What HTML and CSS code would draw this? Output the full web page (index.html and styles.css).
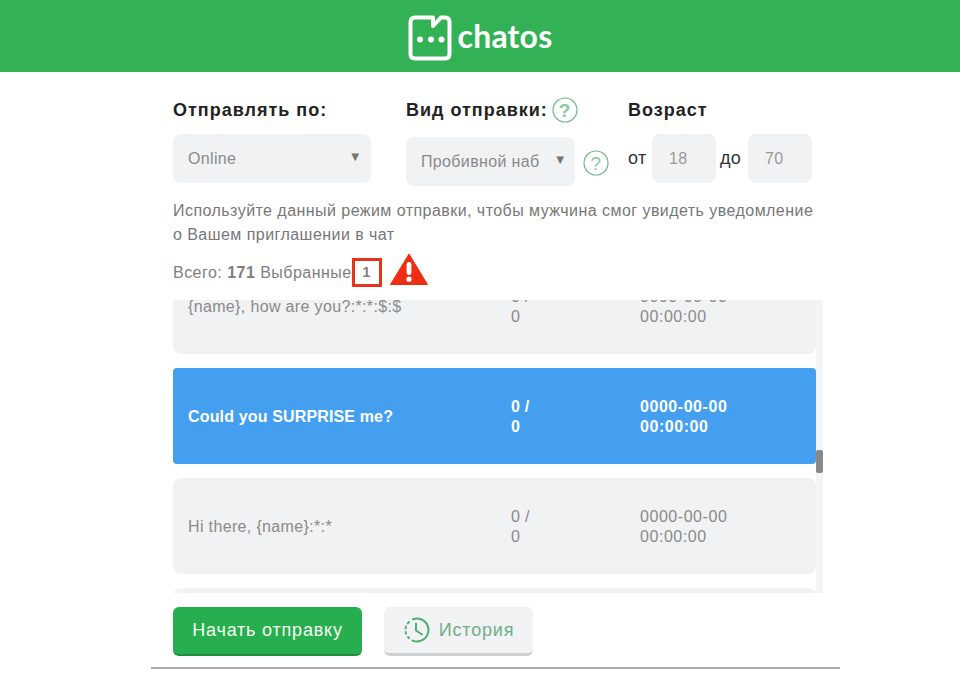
FILE: index.html
```html
<!DOCTYPE html>
<html>
<head>
    <meta charset="utf-8">
    <title>chatos</title>
    <link rel="stylesheet" href="styles.css">
</head>
<body>
    <header class="top">
        <svg class="logo" viewBox="0 0 44 46" width="44" height="46">
            <path d="M7 2.5H25L25 11L33 2.5H37Q41.5 2.5 41.5 7V39Q41.5 43.5 37 43.5H7Q2.5 43.5 2.5 39V7Q2.5 2.5 7 2.5Z" fill="none" stroke="#fff" stroke-width="4" stroke-linejoin="round"/>
            <circle cx="12" cy="24.5" r="3" fill="#fff"/>
            <circle cx="23" cy="24.5" r="3" fill="#fff"/>
            <circle cx="33.5" cy="24.5" r="3" fill="#fff"/>
        </svg>
        <span class="brand">chatos</span>
    </header>

    <main class="wrap">
        <div class="filters">
            <div class="col col-send">
                <div class="label">Отправлять по:</div>
                <div class="select">Online<span class="arrow">▼</span></div>
            </div>
            <div class="col col-type">
                <div class="label">Вид отправки:
                    <svg class="help" viewBox="0 0 26 26" width="26" height="26"><circle cx="13" cy="13" r="12" fill="none" stroke="#6fb98a" stroke-width="1.2"/><text x="13" y="19.5" text-anchor="middle" class="help-mark">?</text></svg>
                </div>
                <div class="type-row">
                    <div class="select select-type">Пробивной наб<span class="arrow">▼</span></div>
                    <svg class="help help-side" viewBox="0 0 26 26" width="26" height="26"><circle cx="13" cy="13" r="12" fill="none" stroke="#6fb98a" stroke-width="1.2"/><text x="13" y="19.5" text-anchor="middle" class="help-mark">?</text></svg>
                </div>
            </div>
            <div class="col">
                <div class="label">Возраст</div>
                <div class="age">
                    <span>от</span><div class="age-box">18</div>
                    <span>до</span><div class="age-box">70</div>
                </div>
            </div>
        </div>

        <p class="hint">Используйте данный режим отправки, чтобы мужчина смог увидеть уведомление о Вашем приглашении в чат</p>

        <div class="totals">
            <span>Всего: <b>171</b> Выбранные</span><span class="picked">1</span>
            <svg class="warn" viewBox="0 0 38 32" width="38" height="32">
                <path d="M19 1L37.5 31.5H.5Z" fill="#ee2e12" stroke="#ee2e12" stroke-linejoin="round"/>
                <rect x="16.6" y="9" width="4.8" height="13" rx="2.2" fill="#fff"/>
                <circle cx="19" cy="26.2" r="2.6" fill="#fff"/>
            </svg>
        </div>

        <div class="list">
            <div class="rows">
                <div class="row row-first">
                    <div class="r-name">{name}, how are you?:*:*:$:$</div>
                    <div class="r-count">0 /<br>0</div>
                    <div class="r-date">0000-00-00<br>00:00:00</div>
                </div>
                <div class="row active">
                    <div class="r-name">Could you SURPRISE me?</div>
                    <div class="r-count">0 /<br>0</div>
                    <div class="r-date">0000-00-00<br>00:00:00</div>
                </div>
                <div class="row">
                    <div class="r-name">Hi there, {name}:*:*</div>
                    <div class="r-count">0 /<br>0</div>
                    <div class="r-date">0000-00-00<br>00:00:00</div>
                </div>
                <div class="row"></div>
            </div>
            <div class="thumb"></div>
        </div>

        <div class="actions">
            <button class="btn btn-start">Начать отправку</button>
            <button class="btn btn-history">
                <svg viewBox="0 0 28 28" width="28" height="28" fill="none" stroke="#4fae74" stroke-width="2">
                    <path d="M10 3.2A11.5 11.5 0 1 1 9.5 24.6" stroke-linecap="round"/>
                    <path d="M6 22.2L5 21M3 17.8L2.6 16M2.6 12.5L3 10.6M4.8 7.4L6 6" stroke-linecap="round"/>
                    <path d="M13 7.5V14.5L19 18.5" stroke-linecap="round" stroke-linejoin="round"/>
                </svg>
                История
            </button>
        </div>
    </main>
</body>
</html>
```

FILE: styles.css
```css
* {box-sizing: border-box;}
html, body {height: 100%;}
body {margin: 0; background-color: #fff; font-family: "Liberation Sans", Arial, sans-serif; font-size: 16px; letter-spacing: .35px; color: #8a8a8a; overflow: hidden;}

/* header */
.top {height: 72px; background-color: #33b155; display: flex; align-items: center; justify-content: center; gap: 6px;}
.logo {display: block; margin-top: 3px;}
.brand {font-family: Lato, sans-serif; font-weight: 700; font-size: 32px; color: #fff; letter-spacing: .2px; line-height: 1;}

/* main block */
.wrap {width: 689px; margin-left: 151px; padding: 0 17px 0 22px; height: 597px; border-bottom: 2px solid #aaa;}

.filters {display: flex; padding-top: 25px;}
.col-send {width: 233px;}
.col-type {width: 222px;}
.label {display: flex; align-items: center; gap: 4px; height: 26px; font-size: 18px; font-weight: 700; letter-spacing: 1px; color: #222; margin-bottom: 11px; white-space: nowrap;}
.select {position: relative; width: 198px; height: 49px; padding-left: 15px; line-height: 49px; background-color: #f1f2f4; border-radius: 8px; white-space: nowrap;}
.arrow {position: absolute; right: 9px; top: -2px; font-size: 13px; color: #777;}
.type-row {display: flex; align-items: center; gap: 8px; padding-top: 3px;}
.select-type {width: 169px; overflow: hidden;}
.select-type .arrow {background-color: #f1f2f4; padding-left: 8px; right: 8px;}
.help {display: block; flex: none;}
.help-side {margin-top: 3px;}
.help-mark {font-family: "Liberation Sans", Arial, sans-serif; font-size: 19px; fill: #8fc7a3;}
.age {display: flex; align-items: center; height: 49px; color: #333; font-size: 18px;}
.age span {width: 24px;}
.age span + .age-box + span {width: 32px; padding-left: 4px;}
.age-box {width: 64px; height: 49px; line-height: 49px; padding-left: 17px; background-color: #f1f2f4; border-radius: 8px; font-size: 16px; color: #999;}

.hint {margin: 13px 0 0; width: 650px; font-size: 16px; letter-spacing: .45px; line-height: 24px; color: #777;}

.totals {display: flex; align-items: center; height: 32px; margin-top: 10px; letter-spacing: .47px; color: #808080; white-space: nowrap;}
.picked {width: 30px; height: 29px; margin-top: -2px; line-height: 23px; text-align: center; border: 3px solid #e8331c; font-weight: 700; font-size: 14px;}
.warn {margin-left: 8px; margin-top: -9px;}

/* list */
.list {position: relative; height: 293px; margin-top: 11px; width: 650px; padding-right: 7px; background-color: #f3f4f6; overflow: hidden;}
.rows {background-color: #fff; margin-top: -42px; padding-bottom: 40px;}
.row {display: flex; align-items: center; height: 96px; margin-bottom: 14px; padding: 1px 0 0 15px; background-color: #f1f2f4; border-radius: 8px; line-height: 20px;}
.row.active {background-color: #459ff0; color: #fff; font-weight: 700; letter-spacing: .15px; border-radius: 4px;}
.r-name {width: 323px;}
.r-count {width: 129px;}
.r-date {letter-spacing: .55px;}
.thumb {position: absolute; right: 0; top: 150px; width: 7px; height: 23px; background-color: #888; border-radius: 2px;}

/* buttons */
.actions {display: flex; gap: 22px; margin-top: 14px;}
.btn {display: flex; align-items: center; justify-content: center; height: 49px; border: 0; border-radius: 6px; font-family: inherit; font-size: 18px; letter-spacing: .8px;}
.btn-start {width: 189px; background-color: #27ae4f; border-bottom: 2px solid #1f8c40; color: #f6fff2;}
.btn-history {width: 149px; gap: 8px; background-color: #f1f2f4; border-bottom: 3px solid #cfd0d2; color: #6fae8b;}
```
